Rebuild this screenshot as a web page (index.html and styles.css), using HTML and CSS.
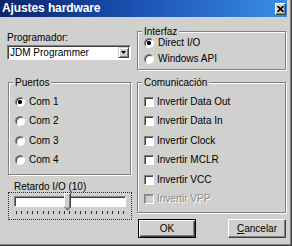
FILE: index.html
```html
<!DOCTYPE html>
<html lang="es">
<head>
<meta charset="utf-8">
<title>Ajustes hardware</title>
<link rel="stylesheet" href="styles.css">
</head>
<body>
<div class="window">
  <div class="titlebar">
    <span class="title">Ajustes hardware</span>
    <span class="close"><svg width="7" height="6" viewBox="0 0 7 6"><path d="M0.5 0 L6.5 6 M6.5 0 L0.5 6" stroke="#000" stroke-width="1.6" fill="none"/></svg></span>
  </div>
  <div class="client">
    <div class="col">
      <div class="label">Programador:</div>
      <div class="combo">
        <span class="combo-text">JDM Programmer</span>
        <span class="combo-btn"><svg width="5" height="3" viewBox="0 0 5 3"><path d="M0 0H5L2.5 3Z" fill="#000"/></svg></span>
      </div>
      <div class="group puertos">
        <div class="legend">Puertos</div>
        <div class="rows">
          <div class="row"><span class="radio checked"></span><span>Com 1</span></div>
          <div class="row"><span class="radio"></span><span>Com 2</span></div>
          <div class="row"><span class="radio"></span><span>Com 3</span></div>
          <div class="row"><span class="radio"></span><span>Com 4</span></div>
        </div>
      </div>
      <div class="label retardo">Retardo I/O (10)</div>
      <div class="track">
        <div class="channel"></div>
        <svg class="thumb" width="7" height="18" viewBox="0 0 7 18">
          <path d="M0 0H7V14L3.5 17.5L0 14Z" fill="#404040"/>
          <path d="M0 0H6V13.6L3.5 16.3L0 13.6Z" fill="#ffffff"/>
          <path d="M1 1H6V13.6L3.5 16.3L1 13.9Z" fill="#808080"/>
          <path d="M1 1H5V13.3L3.2 15.2L1 13.3Z" fill="#d0d0ce"/>
        </svg>
        <div class="ticks">
          <span></span><span></span><span></span><span></span><span></span><span></span><span></span>
          <span></span><span></span><span></span><span></span><span></span><span></span><span></span>
          <span></span><span></span><span></span><span></span><span></span><span></span><span></span>
        </div>
      </div>
    </div>
    <div class="col">
      <div class="group interfaz">
        <div class="legend">Interfaz</div>
        <div class="rows">
          <div class="row"><span class="radio checked"></span><span>Direct I/O</span></div>
          <div class="row"><span class="radio"></span><span>Windows API</span></div>
        </div>
      </div>
      <div class="group comunicacion">
        <div class="legend">Comunicación</div>
        <div class="rows">
          <div class="row"><span class="check"></span><span>Invertir Data Out</span></div>
          <div class="row"><span class="check"></span><span>Invertir Data In</span></div>
          <div class="row"><span class="check"></span><span>Invertir Clock</span></div>
          <div class="row"><span class="check"></span><span>Invertir MCLR</span></div>
          <div class="row"><span class="check"></span><span>Invertir VCC</span></div>
          <div class="row disabled"><span class="check"></span><span>Invertir VPP</span></div>
        </div>
      </div>
      <div class="buttons">
        <div class="btn default">OK</div>
        <div class="btn"><span><u>C</u>ancelar</span></div>
      </div>
    </div>
  </div>
</div>
</body>
</html>
```
FILE: styles.css
```css
html, body {
  margin: 0;
  padding: 0;
  background: #d0d0ce;
}

.window {
  width: 292px;
  height: 246px;
  box-sizing: border-box;
  padding-right: 5px;
  background: #d0d0ce;
  box-shadow: inset -1px -1px 0 #404040, inset -2px -2px 0 #808080;
  font-family: "Liberation Sans Narrow", "Liberation Sans", Arial, sans-serif;
  font-size: 10px;
  color: #000;
  overflow: hidden;
}

.titlebar {
  height: 17px;
  display: flex;
  align-items: center;
  padding-left: 2px;
  padding-right: 1px;
  background: linear-gradient(90deg, #0a246a 0%, #1a4fb0 45%, #3a8de2 100%);
}

.title {
  font-family: "Liberation Sans", Arial, sans-serif;
  font-weight: bold;
  font-size: 12px;
  letter-spacing: -0.1px;
  color: #fff;
  flex: 1;
  line-height: 17px;
}

.close {
  width: 11px;
  height: 12px;
  box-sizing: border-box;
  background: #d0d0ce;
  border: 1px solid;
  border-color: #fff #404040 #404040 #fff;
  box-shadow: inset -1px -1px 0 #808080;
  display: flex;
  align-items: center;
  justify-content: center;
  margin-top: 1px;
}

.client {
  display: grid;
  grid-template-columns: 124px 149px;
  column-gap: 6px;
  padding: 14px 0 0 7px;
}

.col {
  display: flex;
  flex-direction: column;
  align-items: stretch;
}

.label {
  line-height: 12px;
  margin-top: 1px;
}

.label.retardo {
  margin-top: 6px;
  margin-left: 7px;
  line-height: 11px;
}

.combo {
  margin-top: 1px;
  height: 15px;
  box-sizing: border-box;
  background: #fff;
  border: 1px solid;
  border-color: #808080 #fff #fff #808080;
  box-shadow: inset 1px 1px 0 #404040;
  display: flex;
  align-items: center;
  padding: 1px 1px 1px 2px;
}

.combo-text {
  flex: 1;
  line-height: 11px;
}

.combo-btn {
  width: 11px;
  height: 11px;
  box-sizing: border-box;
  background: #d0d0ce;
  border: 1px solid;
  border-color: #d0d0ce #404040 #404040 #d0d0ce;
  box-shadow: inset 1px 1px 0 #fff, inset -1px -1px 0 #808080;
  display: flex;
  align-items: center;
  justify-content: center;
}

.group {
  border: 1px solid #808080;
  box-shadow: 1px 1px 0 #fff, inset 1px 1px 0 #fff;
}

.legend {
  width: fit-content;
  margin: -7px 0 -6px 4px;
  padding: 0 2px;
  line-height: 13px;
  background: #d0d0ce;
}

.rows {
  display: flex;
  flex-direction: column;
}

.row {
  display: flex;
  align-items: center;
  gap: 4px;
  padding-left: 6px;
  height: 19.5px;
  line-height: 12px;
}

.puertos {
  margin-top: 22px;
  margin-left: 1px;
}

.puertos .rows {
  padding: 9px 0 4px;
}

.interfaz .rows {
  padding: 3px 0 2px;
}

.interfaz .row {
  height: 16px;
}

.comunicacion {
  margin-top: 12px;
}

.comunicacion .rows {
  padding: 9px 0 3px;
}

.comunicacion .row {
  gap: 3px;
}

.radio {
  width: 10px;
  height: 10px;
  box-sizing: border-box;
  border-radius: 50%;
  background: #fff;
  border: 1px solid;
  border-color: #808080 #fff #fff #808080;
  box-shadow: inset 1px 1px 0 #404040;
  flex: none;
}

.radio.checked {
  background: radial-gradient(circle, #000 0 1.8px, #fff 2.4px);
}

.check {
  width: 10px;
  height: 10px;
  box-sizing: border-box;
  background: #fff;
  border: 1px solid;
  border-color: #808080 #fff #fff #808080;
  box-shadow: inset 1px 1px 0 #404040;
  flex: none;
}

.disabled {
  color: #8a8a8a;
  text-shadow: 1px 1px 0 #fff;
}

.disabled .check {
  background: #d0d0ce;
  box-shadow: inset 1px 1px 0 #9a9a9a;
}

.track {
  position: relative;
  margin-left: 1px;
  width: 124px;
  height: 28px;
  box-sizing: border-box;
  border: 1px dotted #303030;
}

.channel {
  margin: 3px 0 0 5px;
  width: 112px;
  height: 11px;
  box-sizing: border-box;
  background: #fff;
  border: 1px solid;
  border-color: #808080 #fff #fff #808080;
  box-shadow: inset 1px 1px 0 #404040;
}

.thumb {
  position: absolute;
  left: 55px;
  top: 0;
}

.ticks {
  margin: 4px 0 0 7px;
  width: 108px;
  height: 3px;
  display: flex;
  justify-content: space-between;
}

.ticks span {
  width: 1px;
  height: 3px;
  background: #303030;
}

.buttons {
  margin-top: 6px;
  padding-left: 1px;
  display: flex;
  justify-content: space-between;
}

.btn {
  width: 58px;
  height: 19px;
  box-sizing: border-box;
  background: #d0d0ce;
  border: 1px solid;
  border-color: #fff #404040 #404040 #fff;
  box-shadow: inset -1px -1px 0 #808080;
  display: flex;
  align-items: center;
  justify-content: center;
  line-height: 12px;
}

.btn.default {
  border-color: #000;
  box-shadow: inset 1px 1px 0 #fff, inset -1px -1px 0 #404040, inset -2px -2px 0 #808080;
}
```
